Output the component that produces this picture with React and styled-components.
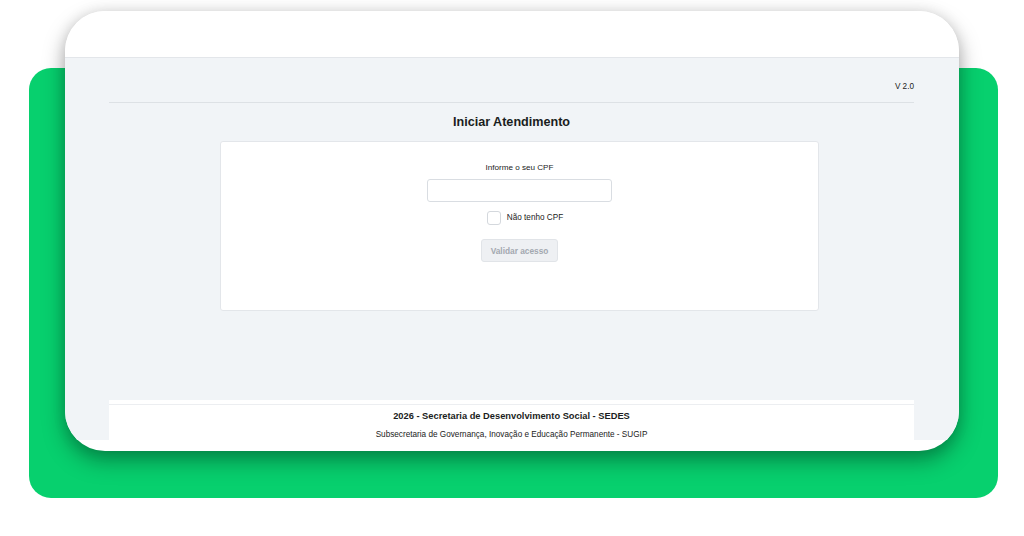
import React from "react";
import styled, { createGlobalStyle } from "styled-components";

const GlobalStyle = createGlobalStyle`
  html, body {
    margin: 0;
    padding: 0;
    background: #ffffff;
  }
  body {
    font-family: "Liberation Sans", Arial, sans-serif;
    color: #222;
  }
  * { box-sizing: border-box; }
`;

/* Both layers share one grid cell: the green slab sits behind the device frame */
const Stage = styled.div`
  width: 1024px;
  height: 536px;
  display: grid;
  overflow: hidden;
  & > * { grid-area: 1 / 1; }
`;

const Backdrop = styled.div`
  margin: 68px 26px 38px 29px;
  border-radius: 22px;
  background: #07d06e;
`;

const Device = styled.div`
  margin: 11px 0 0 65px;
  width: 894px;
  height: 440px;
  border-radius: 40px;
  background: #ffffff;
  overflow: hidden;
  display: flex;
  flex-direction: column;
  box-shadow: 0 10px 22px rgba(0, 0, 0, 0.34), 0 0 14px rgba(0, 0, 0, 0.1);
`;

const TopBar = styled.div`
  height: 47px;
  flex: none;
  background: #ffffff;
  border-bottom: 1px solid #e3e6ea;
`;

const Screen = styled.main`
  height: 382px;
  flex: none;
  background: #f1f4f7;
  padding: 0 45px 0 44px;
  display: flex;
  flex-direction: column;
`;

const VersionRow = styled.div`
  height: 45px;
  flex: none;
  display: flex;
  justify-content: flex-end;
  align-items: flex-end;
  padding-bottom: 10px;
  border-bottom: 1px solid #dde1e5;
  font-size: 8.2px;
  line-height: 10px;
  color: #222;
`;

const Title = styled.h1`
  margin: 0;
  height: 38px;
  flex: none;
  display: flex;
  align-items: center;
  justify-content: center;
  font-size: 12.6px;
  font-weight: 700;
  color: #1a1d21;
`;

const Panel = styled.section`
  margin-left: 111px;
  width: 599px;
  height: 170px;
  flex: none;
  background: #ffffff;
  border: 1px solid #e3e6ea;
  border-radius: 3px;
  display: flex;
  flex-direction: column;
  align-items: center;
  padding-top: 21px;
`;

const Label = styled.label`
  font-size: 8.1px;
  line-height: 10px;
  color: #222;
`;

const Input = styled.input`
  margin-top: 6px;
  width: 185px;
  height: 23px;
  border: 1px solid #d9dde2;
  border-radius: 3px;
  background: #fff;
  outline: none;
  font-family: inherit;
  font-size: 8px;
`;

const CheckRow = styled.label`
  margin-top: 9px;
  margin-left: 11px;
  display: flex;
  align-items: center;
  gap: 6px;
  font-size: 8.2px;
  line-height: 14px;
  color: #222;
`;

const Box = styled.span`
  width: 14px;
  height: 14px;
  border: 1px solid #d4d8dd;
  border-radius: 3px;
  background: #fff;
`;

const Button = styled.button`
  margin-top: 14px;
  width: 77px;
  height: 23px;
  padding: 0;
  border: 1px solid #e1e4e8;
  border-radius: 3px;
  background: #eef0f3;
  color: #a3a8b0;
  font-family: inherit;
  font-size: 8.3px;
  font-weight: 700;
`;

const Footer = styled.footer`
  margin-top: auto;
  height: 40px;
  flex: none;
  background: #ffffff;
  padding-top: 4px;
`;

const FooterInner = styled.div`
  border-top: 1px solid #eceef1;
  padding-top: 5px;
  text-align: center;
`;

const FooterTitle = styled.div`
  font-size: 9.3px;
  line-height: 12px;
  font-weight: 700;
  color: #1a1d21;
`;

const FooterSub = styled.div`
  margin-top: 8px;
  font-size: 8.2px;
  line-height: 10px;
  color: #222;
`;

export default function App() {
  return (
    <>
      <GlobalStyle />
      <Stage>
        <Backdrop />
        <Device>
          <TopBar />
          <Screen>
            <VersionRow>V 2.0</VersionRow>
            <Title>Iniciar Atendimento</Title>
            <Panel>
              <Label htmlFor="cpf">Informe o seu CPF</Label>
              <Input id="cpf" type="text" />
              <CheckRow>
                <Box />
                Não tenho CPF
              </CheckRow>
              <Button type="button" disabled>Validar acesso</Button>
            </Panel>
            <Footer>
              <FooterInner>
                <FooterTitle>2026 - Secretaria de Desenvolvimento Social - SEDES</FooterTitle>
                <FooterSub>Subsecretaria de Governança, Inovação e Educação Permanente - SUGIP</FooterSub>
              </FooterInner>
            </Footer>
          </Screen>
        </Device>
      </Stage>
    </>
  );
}
